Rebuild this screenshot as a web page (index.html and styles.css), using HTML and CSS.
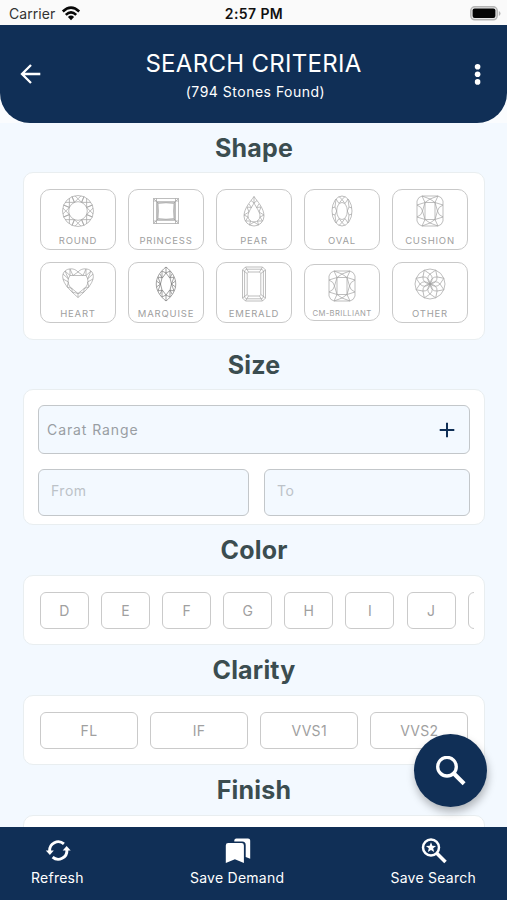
FILE: index.html
```html
<!DOCTYPE html>
<html lang="en">
<head>
<meta charset="utf-8">
<meta name="viewport" content="width=device-width, initial-scale=1">
<title>Search Criteria</title>
<link rel="stylesheet" href="styles.css">
</head>
<body>
<svg class="defs" aria-hidden="true">
  <defs>
    <g id="facet">
      <path d="M-3.600-8.600 0-12.200 3.600-8.600M0-12.200-3-15.200M0-12.200 3-15.200M-3.600-8.600-6-14.300M3.600-8.600 6-14.300"/>
    </g>
    <g id="brilliant">
      <circle r="15.500"/><circle r="9.300"/>
      <use href="#facet"/><use href="#facet" transform="rotate(45)"/><use href="#facet" transform="rotate(90)"/><use href="#facet" transform="rotate(135)"/><use href="#facet" transform="rotate(180)"/><use href="#facet" transform="rotate(225)"/><use href="#facet" transform="rotate(270)"/><use href="#facet" transform="rotate(315)"/>
    </g>
    <g id="oval">
      <ellipse rx="10" ry="15"/><ellipse rx="5.300" ry="8.500"/>
      <path d="M-3-7.500 0-11.500 3-7.500 6-12M-3-7.500-6-12M0-11.500-3-14.500M0-11.500 3-14.500M-3 7.500 0 11.500 3 7.500 6 12M-3 7.500-6 12M0 11.500-3 14.500M0 11.500 3 14.500M-6-12-7-4-5.300 0-7 4-6 12M6-12 7-4 5.300 0 7 4 6 12M-7-4-9.800-3M-7 4-9.800 3M7-4 9.800-3M7 4 9.800 3"/>
    </g>
    <g id="cushion">
      <path d="M-8-15H8Q12-14 13-10V10Q12 14 8 15H-8Q-12 14-13 10V-10Q-12-14-8-15z"/>
      <path d="M-5-8.500H5V8.500H-5z"/>
      <path d="M-8-15-5-8.500-13-6M8-15 5-8.500 13-6M-8 15-5 8.500-13 6M8 15 5 8.500 13 6"/>
      <path d="M-5-8.500 0-12 5-8.500M-5 8.500 0 12 5 8.500M-8-15 0-12 8-15M-8 15 0 12 8 15M-13-6Q-8-4-7.500 0Q-8 4-13 6M13-6Q8-4 7.500 0Q8 4 13 6M-5-8.500-7.500 0-5 8.500M5-8.500 7.500 0 5 8.500"/>
    </g>
    <g id="petal">
      <path d="M0 0Q-4.500-6 0-10Q4.500-6 0 0M0-10-5.700-13.800M0-10 5.700-13.800"/>
    </g>
  </defs>
</svg>
<div class="phone">
  <div class="status">
    <div class="carrier">Carrier
      <svg width="20" height="15" viewBox="0 0 20 15"><g fill="none" stroke="#080808" stroke-width="2.600"><path d="M1.800 5.500Q10-2.200 18.200 5.500"/><path d="M4.800 8.900Q10 4 15.200 8.900"/></g><path d="M6.900 10.900Q10 8.200 13.100 10.900L10 14.200z" fill="#080808"/></svg>
    </div>
    <div class="time">2:57 PM</div>
    <svg class="battery" width="31" height="15" viewBox="0 0 31 15"><rect x=".8" y=".8" width="26.400" height="13" rx="4" fill="#e8e8e8" stroke="#b5b5b5" stroke-width="1.500"/><rect x="2.600" y="2.600" width="22.800" height="9.400" rx="2" fill="#050505"/><path d="M28.800 5v5q1.700-.8 1.700-2.500T28.800 5z" fill="#b5b5b5"/></svg>
  </div>
  <header class="top">
    <div class="bar">
      <svg width="22" height="22" viewBox="0 0 22 22" fill="none" stroke="#fff" stroke-width="2.300"><path d="M21.300 11H3.500M12 2 3 11l9 9"/></svg>
      <div class="heading"><h1>SEARCH CRITERIA</h1><p>(794 Stones Found)</p></div>
      <svg width="22" height="22" viewBox="0 0 22 22" fill="#fff"><circle cx="11.600" cy="3.700" r="2.800"/><circle cx="11.600" cy="11.300" r="2.800"/><circle cx="11.600" cy="18.900" r="2.800"/></svg>
    </div>
  </header>
  <main class="content">
    <h2>Shape</h2>
    <section class="card shapes">
      <div class="shape"><svg class="gem" viewBox="-18 -18 36 36"><use href="#brilliant"/></svg><span>ROUND</span></div>
      <div class="shape"><svg class="gem" viewBox="-18 -18 36 36"><path d="M-12.500-12.500h25v25h-25z"/><path d="M-12.500-12.500-9-9M12.500-12.500 9-9M-12.500 12.500-9 9M12.500 12.500 9 9M-12.500-10h3v-2.500M12.500-10h-3v-2.500M-12.500 10h3v2.500M12.500 10h-3v2.500"/><path class="heavy" d="M-9-9H9V9H-9z"/><path d="M-8-7.500Q0-9 8-7.500Q7 0 8 7.500Q0 9-8 7.500Q-7 0-8-7.500z"/></svg><span>PRINCESS</span></div>
      <div class="shape"><svg class="gem" viewBox="-18 -18 36 36"><path d="M0-14.500C3-10 10-3 10 5A10 10 0 0 1-10 5C-10-3-3-10 0-14.500z"/><path d="M0-8C2-4 6 1 6 5A6 6 0 0 1-6 5C-6 1-2-4 0-8z"/><path d="M0-14.500V-8M-3-10.500 0-8 3-10.500M-7-4-2.500-3.500-5-7M7-4 2.500-3.500 5-7M-10 4-5 1-7-4M10 4 5 1 7-4M-10 4-6 6-8.500 10M10 4 6 6 8.500 10M-8.500 10-3.500 10-4.500 14M8.500 10 3.500 10 4.500 14M-4.500 14 0 11 4.500 14"/></svg><span>PEAR</span></div>
      <div class="shape"><svg class="gem" viewBox="-18 -18 36 36"><use href="#oval"/></svg><span>OVAL</span></div>
      <div class="shape"><svg class="gem" viewBox="-18 -18 36 36"><use href="#cushion"/></svg><span>CUSHION</span></div>
      <div class="shape"><svg class="gem" viewBox="-18 -18 36 36"><path d="M0-12C-4-17-13-16-15-10C-17-3-10 5 0 13.500C10 5 17-3 15-10C13-16 4-17 0-12z"/><path d="M0-8.500H-8Q-12-3-8 3L0 9.500 8 3Q12-3 8-8.500z"/><path d="M-8-15-5-8.500 0-12 5-8.500 8-15M-13-13-8-8.500-8-15M13-13 8-8.500 8-15M-15-10-9.500-5-13-13M15-10 9.500-5 13-13M-15-5-9.500-2-11 3M15-5 9.500-2 11 3M-11 3-6 4.500-6 8M11 3 6 4.500 6 8M-6 8 0 9.500 6 8M0 9.500V13.500"/></svg><span>HEART</span></div>
      <div class="shape"><svg class="gem dark" viewBox="-18 -18 36 36"><path d="M0-17C13-7 13 7 0 17C-13 7-13-7 0-17z"/><path d="M0-11Q11 0 0 11Q-11 0 0-11z"/><path d="M-4-13 0-11 4-13M-4-13-4-6-8-7-5.500 0-8 7-4 6-4 13M4-13 4-6 8-7 5.500 0 8 7 4 6 4 13M-4 13 0 11 4 13M0-17V-11M0 17V11M-9.500-3-5.500 0-9.500 3M9.500-3 5.500 0 9.500 3M-6-10-4-6M6-10 4-6M-6 10-4 6M6 10 4 6"/></svg><span>MARQUISE</span></div>
      <div class="shape"><svg class="gem" viewBox="-18 -18 36 36"><path d="M-8.500-17H8.500L11.500-14V14L8.500 17H-8.500L-11.500 14V-14z"/><path d="M-8-14.800H8L9.400-13V13L8 14.800H-8L-9.400 13V-13z"/><path d="M-5.500-12H5.500L6.800-10.500V10.500L5.500 12H-5.500L-6.800 10.500V-10.500z"/><path d="M-8.500-17-5.500-12M-11.500-14-6.800-10.500M8.500-17 5.500-12M11.500-14 6.800-10.500M-8.500 17-5.500 12M-11.500 14-6.800 10.500M8.500 17 5.500 12M11.500 14 6.800 10.500"/></svg><span>EMERALD</span></div>
      <div class="shape small"><svg class="gem" viewBox="-18 -18 36 36"><use href="#cushion"/></svg><span>CM-BRILLIANT</span></div>
      <div class="shape"><svg class="gem" viewBox="-18 -18 36 36"><use href="#petal"/><use href="#petal" transform="rotate(45)"/><use href="#petal" transform="rotate(90)"/><use href="#petal" transform="rotate(135)"/><use href="#petal" transform="rotate(180)"/><use href="#petal" transform="rotate(225)"/><use href="#petal" transform="rotate(270)"/><use href="#petal" transform="rotate(315)"/><path d="M0-15 5.700-13.800 10.600-10.600 13.800-5.700 15 0 13.800 5.700 10.600 10.600 5.700 13.800 0 15-5.700 13.800-10.600 10.600-13.800 5.700-15 0-13.800-5.700-10.600-10.600-5.700-13.800z"/></svg><span>OTHER</span></div>
    </section>
    <h2>Size</h2>
    <section class="card size">
      <div class="field carat"><span>Carat Range</span><svg width="16" height="16" viewBox="0 0 16 16" stroke="#102f56" stroke-width="2"><path d="M8 .7v14.600M.7 8h14.600"/></svg></div>
      <div class="range"><div class="field from">From</div><div class="field to">To</div></div>
    </section>
    <h2>Color</h2>
    <section class="card chips"><div class="track">
      <div class="chip">D</div><div class="chip">E</div><div class="chip">F</div><div class="chip">G</div><div class="chip">H</div><div class="chip">I</div><div class="chip">J</div><div class="chip"></div>
    </div></section>
    <h2>Clarity</h2>
    <section class="card chips"><div class="track">
      <div class="chip wide">FL</div><div class="chip wide">IF</div><div class="chip wide">VVS1</div><div class="chip wide">VVS2</div>
    </div></section>
    <h2>Finish</h2>
    <section class="card chips"><div class="track"></div></section>
  </main>
  <nav class="bottom">
    <div class="action refresh"><svg width="26" height="26" viewBox="0 0 26 26"><g fill="none" stroke="#fff" stroke-width="2.900"><path d="M4.600 13A8.700 8.700 0 0 1 18.900 5.800"/><path d="M21.900 12A8.700 8.700 0 0 1 7.600 19.200"/></g><path d="M.8 12.400h8L4.900 17z" fill="#fff"/><path d="M25.700 12.600h-8l3.900-4.600z" fill="#fff"/></svg><span>Refresh</span></div>
    <div class="action demand"><svg width="26" height="26" viewBox="0 0 26 26" fill="#fff"><path d="M9.300 2.200Q9.500.4 11.300.4H23Q25.200.4 25.200 2.600V20.800L20.700 19V7.200Q20.700 3.600 17.200 3.600H9.300z"/><path d="M3.200 5H16.500Q18.900 5 18.900 7.400V25L9.900 21.200.8 25V7.400Q.8 5 3.200 5z"/></svg><span>Save Demand</span></div>
    <div class="action search"><svg width="26" height="26" viewBox="0 0 26 26"><circle cx="10" cy="9.500" r="8" fill="none" stroke="#fff" stroke-width="2.500"/><path d="m15.500 15 9 9" stroke="#fff" stroke-width="3.500"/><path fill="#fff" d="m10 4.300 1.350 3.500 3.750.2-2.900 2.350.95 3.650L10 11.950 6.850 14l.95-3.650L4.900 8l3.750-.2z"/></svg><span>Save Search</span></div>
  </nav>
  <div class="fab"><svg width="30" height="30" viewBox="0 0 30 30" fill="none" stroke="#fff"><circle cx="11" cy="10.700" r="9.300" stroke-width="3.300"/><path d="m18.300 18 9.800 9.800" stroke-width="4.200"/></svg></div>
</div>
</body>
</html>
```
FILE: styles.css
```css
* { box-sizing: border-box; }
body { margin: 0; font-family: Inter, "Liberation Sans", sans-serif; background: #f3f9ff; }
h1, h2, p { margin: 0; }
.defs { position: absolute; width: 0; height: 0; }
.phone { position: relative; display: flex; flex-direction: column; width: 507px; height: 900px; overflow: hidden; }

.status { display: grid; grid-template-columns: 1fr auto 1fr; align-items: center; flex: none; height: 25px; padding: 2px 6px 0 9px; background: #fafafa; color: #111; font-size: 14px; }
.carrier { display: flex; align-items: center; gap: 6px; color: #333; letter-spacing: .05px; }
.time { margin-right: 2px; font-weight: 600; letter-spacing: .4px; }
.battery { justify-self: end; }

.top { flex: none; background: #fafcfe; }
.bar { display: flex; justify-content: space-between; align-items: center; height: 98px; padding: 0 19px; border-radius: 0 0 30px 30px; background: #102f56; color: #fff; }
.heading { text-align: center; padding-top: 2px; }
.heading h1 { font-size: 24px; line-height: 30px; font-weight: 400; letter-spacing: .3px; }
.heading p { margin: 4px 0 0 4px; font-size: 14px; line-height: 18px; letter-spacing: .5px; }

.content { flex: 1; min-height: 0; overflow: hidden; padding: 0 22px 0 23px; }
h2 { height: 50px; line-height: 51px; text-align: center; font-size: 25px; font-weight: 650; letter-spacing: .2px; color: #3b4d50; }
.card { border: 1px solid #e9eef0; border-radius: 10px; background: #fff; }

.shapes { display: grid; grid-template-columns: repeat(5, 76px); gap: 12px; height: 168px; margin: -1px 0 0; padding: 16px; align-content: start; }
.shapes + h2 { height: 49px; }
.shape { display: flex; flex-direction: column; align-items: center; height: 61px; padding-top: 3px; border: 1px solid #c9c9c9; border-radius: 10px; color: #a0a0a0; font-size: 9.5px; line-height: 12px; letter-spacing: .8px; white-space: nowrap; }
.shape span { margin-top: 6px; }
.shape.small { height: 57px; margin-top: 2px; font-size: 7.7px; letter-spacing: .35px; }
.shape.small span { margin-top: 4px; }
.gem { flex: none; width: 36px; height: 36px; fill: none; stroke: #a2a2a2; stroke-width: .7; }
.gem.dark { stroke: #7a7a7a; }
.heavy { stroke: #8c8c8c; stroke-width: 1.1; }

.size { height: 136px; padding: 15px 14px; }
.field { display: flex; align-items: center; border: 1px solid #c3c7ca; border-radius: 6px; background: #f3f9ff; font-size: 14px; letter-spacing: .5px; color: #bcc2c8; }
.carat { justify-content: space-between; height: 49px; padding: 0 14px 0 8px; color: #999ea3; letter-spacing: .9px; }
.range { display: grid; grid-template-columns: 211px 1fr; gap: 15px; margin-top: 15px; }
.from, .to { height: 47px; padding: 0 12px 4px; }

.chips { height: 70px; padding: 16px 10px 0 16px; }
.track { display: flex; gap: 12.1px; overflow: hidden; }
.chip { display: flex; flex: none; align-items: center; justify-content: center; width: 49px; height: 37px; border: 1px solid #cacaca; border-radius: 6px; color: #a0a0a0; font-size: 14px; letter-spacing: .3px; }
.wide { width: 98px; }

.bottom { display: flex; justify-content: space-between; flex: none; height: 73px; padding: 11px 31px 0; background: #102f56; color: #fff; }
.action { display: flex; flex-direction: column; align-items: center; font-size: 14px; line-height: 18px; letter-spacing: .25px; }
.action span { margin-top: 5px; }
.action svg { margin-left: 1px; }
.fab { position: absolute; right: 20px; bottom: 93px; display: grid; place-items: center; width: 73px; height: 73px; border-radius: 50%; background: #102f56; box-shadow: 1px 5px 9px rgba(0, 0, 0, .28); }
```
